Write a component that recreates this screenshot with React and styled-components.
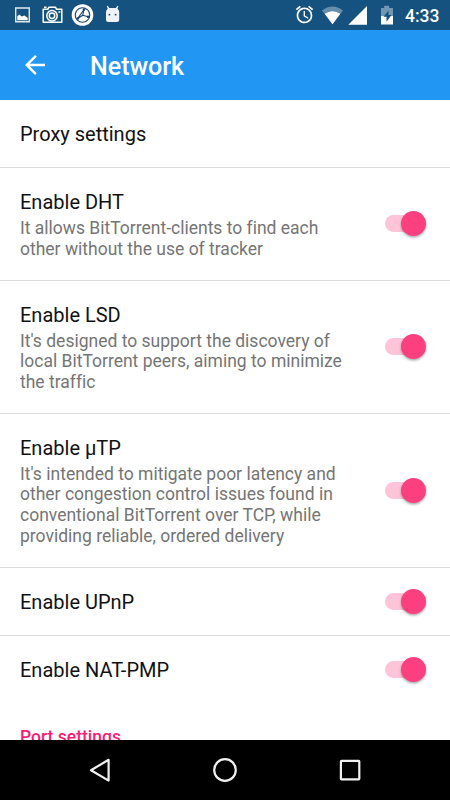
import React from "react";
import styled, { createGlobalStyle } from "styled-components";
import { MdArrowBack, MdAlarm } from "react-icons/md";

const settings = [
  { title: "Proxy settings" },
  {
    title: "Enable DHT",
    lines: ["It allows BitTorrent-clients to find each", "other without the use of tracker"],
    on: true,
  },
  {
    title: "Enable LSD",
    lines: [
      "It's designed to support the discovery of",
      "local BitTorrent peers, aiming to minimize",
      "the traffic",
    ],
    on: true,
  },
  {
    title: "Enable µTP",
    lines: [
      "It's intended to mitigate poor latency and",
      "other congestion control issues found in",
      "conventional BitTorrent over TCP, while",
      "providing reliable, ordered delivery",
    ],
    on: true,
  },
  { title: "Enable UPnP", on: true },
  { title: "Enable NAT-PMP", on: true, last: true },
];

function NotificationIcons() {
  return (
    <svg width="130" height="30" viewBox="0 0 130 30" fill="none">
      <path
        fill="#dfe8ef"
        fillRule="evenodd"
        d="M15 7.3h15v15.2H15zM16.4 8.7v12.4h12.2V8.7z"
      />
      <path fill="#fff" d="M17.3 20.2v-4l2-1.7 2.5 2 2.5-1 3.4 2.2v2.5z" />
      <g stroke="#fff" strokeWidth="1.5">
        <path d="M43.2 9.3h4.6l1.2-2.1h6.4l1.2 2.1h5.2v13H43.2z" strokeLinejoin="round" />
        <circle cx="52" cy="15.8" r="5.2" />
        <circle cx="52" cy="15.8" r="2.7" />
        <path d="M44 7.2h2.5M58.4 12h2" />
      </g>
      <circle cx="82.5" cy="15" r="10.8" fill="#fff" />
      <g stroke="#15406f" strokeWidth="1.1">
        <circle cx="82.5" cy="15" r="7.3" />
        <path d="M84 9.5l-1.3 5.8-5 3.2M82.7 15.3l5.5 1.5M84 9.5l-6.3 9" />
      </g>
      <g fill="#15406f">
        <circle cx="84" cy="9.5" r="1.2" />
        <circle cx="77.7" cy="18.5" r="1.3" />
        <circle cx="88" cy="16.8" r="1.2" />
      </g>
      <path
        fill="#edf2f6"
        d="M106 12q0-2 1.7-3.2L106.8 6.2l.9-.5 1.6 2.3h6.6l1.6-2.3.9.5-.9 2.6q1.7 1.2 1.7 3.2v7.5q0 2.5-2.5 2.5h-8.2q-2.5 0-2.5-2.5z"
      />
      <g fill="#15527f">
        <circle cx="109.4" cy="14.7" r="0.9" />
        <circle cx="115.6" cy="14.7" r="0.9" />
      </g>
    </svg>
  );
}

function SignalIcons() {
  return (
    <svg width="76" height="30" viewBox="320 0 76 30">
      <path fill="#fff" opacity="0.35" d="M332.5 24.3L322 10.4q10.5-8 21 0z" />
      <path fill="#fff" d="M332.5 24.3l-7.8-10.5q7.8-5 15.6 0z" />
      <path fill="#fff" d="M367 6v18.7h-18.7z" />
      <path fill="#fff" opacity="0.4" d="M381 8h3.2V5.8h5V8h3.8v8h-12z" />
      <path fill="#fff" d="M381 16h12v8.5h-12z" />
      <path fill="#15527f" d="M388.5 10.5l-5 6.2h3v5l5-6.7h-3z" />
    </svg>
  );
}

function NavIcon({ shape }) {
  return (
    <svg width="30" height="30" viewBox="0 0 30 30" fill="none" stroke="#f0f0f0" strokeWidth="2.2">
      {shape === "back" && <path d="M23.6 4.8v20.8L6 15.2z" strokeLinejoin="round" />}
      {shape === "home" && <circle cx="15" cy="15" r="10.8" />}
      {shape === "recent" && <rect x="5.9" y="5.9" width="18.4" height="18.4" rx="0.6" />}
    </svg>
  );
}

export default function App() {
  return (
    <Screen>
      <GlobalStyle />
      <StatusBar>
        <NotificationIcons />
        <StatusRight>
          <MdAlarm size={21} />
          <SignalIcons />
          <Clock>4:33</Clock>
        </StatusRight>
      </StatusBar>
      <Toolbar>
        <MdArrowBack size={30} />
        <h1>Network</h1>
      </Toolbar>
      <Content>
        {settings.map((item) => (
          <Row key={item.title} $last={item.last}>
            <div>
              <Title>{item.title}</Title>
              {item.lines && (
                <Summary>
                  {item.lines.map((line) => (
                    <span key={line}>{line}</span>
                  ))}
                </Summary>
              )}
            </div>
            {item.on && (
              <Switch>
                <Thumb />
              </Switch>
            )}
          </Row>
        ))}
        <Category>Port settings</Category>
      </Content>
      <NavBar>
        <NavIcon shape="back" />
        <NavIcon shape="home" />
        <NavIcon shape="recent" />
      </NavBar>
    </Screen>
  );
}

const GlobalStyle = createGlobalStyle`
  body {
    margin: 0;
    font-family: Roboto, sans-serif;
    font-variant-ligatures: none;
  }
  * {
    box-sizing: border-box;
  }
  svg {
    display: block;
    flex-shrink: 0;
  }
`;

const Screen = styled.div`
  width: 450px;
  height: 800px;
  display: flex;
  flex-direction: column;
  overflow: hidden;
  background-color: #fff;
`;

const StatusBar = styled.header`
  height: 30px;
  flex-shrink: 0;
  display: flex;
  justify-content: space-between;
  background-color: #15527f;
  color: #fff;
`;

const StatusRight = styled.div`
  display: flex;
  align-items: center;
  padding-right: 10px;
  svg:first-child {
    margin: 0 5px 1px 0;
  }
`;

const Clock = styled.span`
  width: 35px;
  margin-left: 9px;
  font-size: 17.5px;
  font-weight: 500;
  line-height: 30px;
  padding-top: 1px;
`;

const Toolbar = styled.div`
  height: 70px;
  flex-shrink: 0;
  display: flex;
  align-items: center;
  gap: 40px;
  padding-left: 20px;
  background-color: #2196f3;
  color: #fff;

  h1 {
    margin: 4px 0 0;
    font-size: 25px;
    font-weight: 500;
    line-height: 30px;
  }
`;

const Content = styled.main`
  flex: 1;
  min-height: 0;
  overflow: hidden;
`;

const Row = styled.div`
  display: flex;
  justify-content: space-between;
  align-items: center;
  padding: 20px 23.5px 19px 20px;
  border-bottom: 1px solid ${({ $last }) => ($last ? "transparent" : "#dcdcdc")};
`;

const Title = styled.div`
  font-size: 20px;
  line-height: 28px;
  color: #111;
`;

const Summary = styled.div`
  margin: 2px 0 1.4px;
  font-size: 17.5px;
  line-height: 20.6px;
  color: #757575;
  white-space: nowrap;

  span {
    display: block;
  }
`;

const Switch = styled.div`
  display: flex;
  align-items: center;
  justify-content: flex-end;
  width: 41.5px;
  height: 17px;
  margin-bottom: 1px;
  border-right: 1px solid transparent;
  background: linear-gradient(#ffc4d8, #ffc4d8) 0 0 / 36px 17px no-repeat;
  border-radius: 9px;
`;

const Thumb = styled.span`
  width: 25px;
  height: 25px;
  flex-shrink: 0;
  border-radius: 50%;
  background-color: #fc407f;
  box-shadow: 0 1.5px 2.5px rgba(0, 0, 0, 0.35);
`;

const Category = styled.div`
  padding: 21px 20px 0;
  font-size: 17.5px;
  font-weight: 500;
  line-height: 24px;
  color: #ff1a75;
`;

const NavBar = styled.nav`
  height: 60px;
  flex-shrink: 0;
  display: flex;
  align-items: center;
  justify-content: center;
  gap: 95px;
  background-color: #000;
`;
